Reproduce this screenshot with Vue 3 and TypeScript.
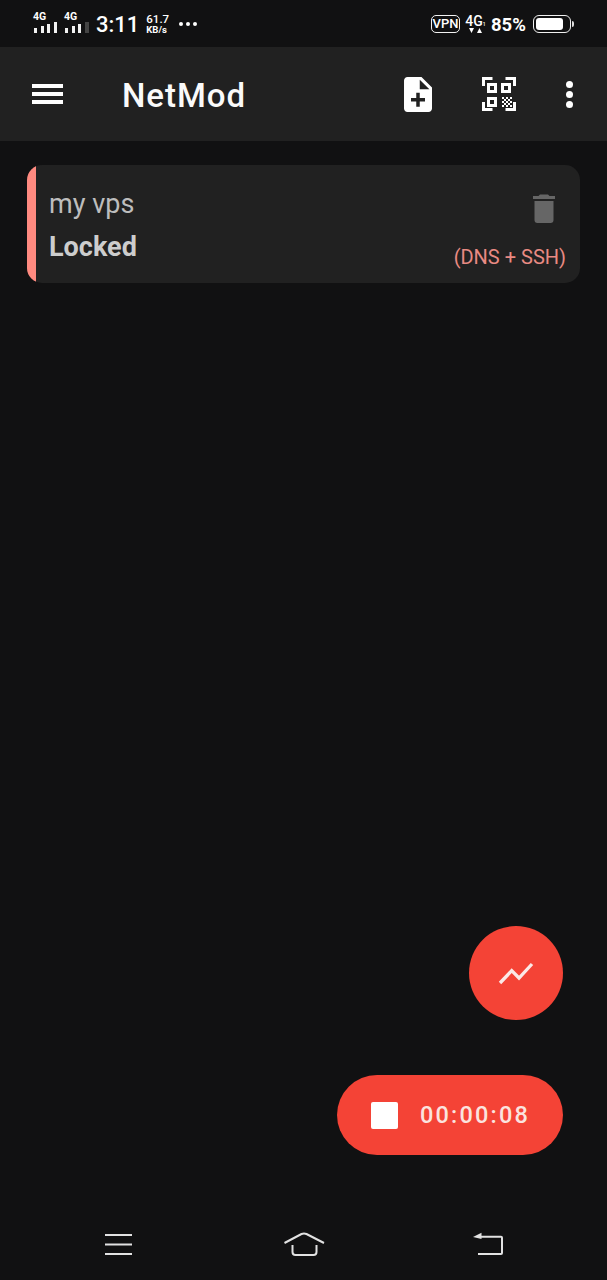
<script setup lang="ts">
const bars1: number[] = [5, 7, 9, 11]
const bars2: number[] = [5, 7, 9]
const checker: number[][] = [
  [20, 20], [24, 20], [28, 20],
  [22, 22], [26, 22],
  [20, 24], [24, 24], [28, 24],
  [22, 26], [26, 26],
  [20, 28], [24, 28], [28, 28]
]
</script>

<template>
  <div class="page">
    <header class="status">
      <div class="status-left">
        <div class="sig">
          <span class="sig-label">4G</span>
          <div class="bars">
            <i v-for="(h, i) in bars1" :key="i" :style="{ height: h + 'px' }"></i>
          </div>
        </div>
        <div class="sig sig-two">
          <span class="sig-label">4G</span>
          <div class="bars">
            <i v-for="(h, i) in bars2" :key="i" :style="{ height: h + 'px' }"></i>
            <i class="off"></i>
          </div>
        </div>
        <span class="time">3:11</span>
        <div class="speed"><span>61.7</span><span class="unit">KB/s</span></div>
        <div class="dots"><i></i><i></i><i></i></div>
      </div>
      <div class="status-right">
        <span class="vpn">VPN</span>
        <div class="net">
          <span class="net-label">4G<small>1</small></span>
          <svg width="15" height="5" viewBox="0 0 15 5"><path d="M1 0h5L3.500 5zM9 5l2.500-5L14 5z" fill="#fff" /></svg>
        </div>
        <span class="pct">85%</span>
        <div class="battery"><div class="level"></div></div>
        <div class="nub"></div>
      </div>
    </header>

    <nav class="appbar">
      <button class="burger" aria-label="menu"><i></i><i></i><i></i></button>
      <h1 class="title">NetMod</h1>
      <div class="actions">
        <svg class="a-file" width="28" height="35" viewBox="4 2 16 20">
          <path d="M14 2H6c-1.100 0-1.990.9-1.990 2L4 20c0 1.100.89 2 1.990 2H18c1.100 0 2-.9 2-2V8l-6-6zm2 14h-3v3h-2v-3H8v-2h3v-3h2v3h3v2zm-3-7V3.500L18.500 9H13z" fill="#fff" />
        </svg>
        <svg class="a-qr" width="34" height="34" viewBox="0 0 34 34" fill="none">
          <path d="M1.500 9V1.500H10.500M23.500 1.500h9V9M1.500 25v7.500H10.500M23.500 32.500h9V25" stroke="#fff" stroke-width="3" />
          <rect x="6.500" y="7.500" width="7" height="7" stroke="#fff" stroke-width="3" />
          <rect x="20.500" y="7.500" width="7" height="7" stroke="#fff" stroke-width="3" />
          <rect x="6.500" y="21.500" width="7" height="7" stroke="#fff" stroke-width="3" />
          <rect v-for="(c, i) in checker" :key="i" :x="c[0]" :y="c[1]" width="2" height="2" fill="#fff" />
        </svg>
        <div class="kebab"><i></i><i></i><i></i></div>
      </div>
    </nav>

    <main class="content">
      <section class="card">
        <div class="card-bar"></div>
        <div class="card-body">
          <div class="card-text">
            <div class="name">my vps</div>
            <div class="state">Locked</div>
          </div>
          <div class="card-side">
            <svg class="trash" width="24" height="30" viewBox="0 0 24 30">
              <path d="M8 1.500h8l1.500 1.500H23v3H1V3h5.500zM2.500 8h19v19a3 3 0 0 1-3 3h-13a3 3 0 0 1-3-3z" fill="#666" />
            </svg>
            <div class="type">(DNS + SSH)</div>
          </div>
        </div>
      </section>

      <div class="fabs">
        <button class="fab" aria-label="stats">
          <svg width="38" height="26" viewBox="0 0 38 26" fill="none">
            <path d="M3 23L14.700 10.700 22 18 35 4" stroke="#fbe9e7" stroke-width="3.300" />
          </svg>
        </button>
        <button class="pill">
          <span class="stop"></span>
          <span class="timer">00:00:08</span>
        </button>
      </div>
    </main>

    <footer class="navbar">
      <svg width="30" height="24" viewBox="0 0 30 24" fill="none">
        <path d="M1 3h27M1 12.500h27M1 22h27" stroke="#e2e2e2" stroke-width="2" />
      </svg>
      <svg class="nav-home" width="42" height="26" viewBox="0 0 42 26" fill="none">
        <path d="M1.500 11L18.500 2Q21 .8 23.500 2L41 11" stroke="#e2e2e2" stroke-width="2" />
        <path d="M9.500 13v7a3 3 0 0 0 3 3h18a3 3 0 0 0 3-3v-7" stroke="#e2e2e2" stroke-width="2" />
      </svg>
      <svg class="nav-back" width="32" height="24" viewBox="0 0 32 24" fill="none">
        <path d="M9 4.800h20a1 1 0 0 1 1 1V21a1 1 0 0 1-1 1H6" stroke="#e2e2e2" stroke-width="2" />
        <path d="M1 5l8.500-4.300V7z" fill="#e2e2e2" />
      </svg>
    </footer>
  </div>
</template>

<style>
html, body { margin: 0; background: #111; }
</style>

<style scoped>
.page {
  width: 607px;
  height: 1280px;
  display: flex;
  flex-direction: column;
  background: #111112;
  font-family: Roboto, "Liberation Sans", sans-serif;
  overflow: hidden;
}
.status {
  height: 47px;
  flex: none;
  display: flex;
  justify-content: space-between;
  color: #fff;
  background: #111112;
}
.status-left {
  display: flex;
  align-items: flex-start;
  padding: 12px 0 0 33px;
}
.sig { width: 31px; display: flex; flex-direction: column; }
.sig-two { width: 32px; }
.sig-label { font-size: 10.500px; font-weight: 700; line-height: 9px; height: 9px; }
.bars { display: flex; align-items: flex-end; gap: 3.600px; height: 11px; margin-top: 1px; padding-left: 1px; }
.bars i { width: 3px; background: #f2f2f2; display: block; flex: none; }
.bars i.off { height: 11px; width: 4px; background: #444; }
.time { font-size: 22px; font-weight: 500; line-height: 24px; margin-top: 1px; }
.speed {
  display: flex;
  flex-direction: column;
  font-size: 11.500px;
  line-height: 11px;
  margin: 2px 0 0 7px;
  font-weight: 500;
}
.unit { font-size: 9.500px; font-weight: 700; line-height: 9px; }
.dots { display: flex; gap: 3px; margin: 10px 0 0 10px; }
.dots i { width: 4px; height: 4px; border-radius: 50%; background: #fff; display: block; }
.status-right {
  display: flex;
  align-items: flex-start;
  padding: 15px 33px 0 0;
}
.vpn {
  width: 29px;
  height: 18px;
  box-sizing: border-box;
  border: 1.500px solid #f2f2f2;
  border-radius: 5px;
  font-size: 13px;
  font-weight: 500;
  line-height: 15px;
  text-align: center;
}
.net { display: flex; flex-direction: column; align-items: center; margin-left: 6px; width: 19px; }
.net-label { font-size: 14px; line-height: 12px; height: 12px; font-weight: 500; white-space: nowrap; }
.net-label small { font-size: 5px; }
.net svg { margin-top: 1px; }
.pct { font-size: 18.500px; font-weight: 700; line-height: 20px; margin-left: 6px; width: 35px; }
.battery {
  width: 38px;
  height: 18px;
  box-sizing: border-box;
  border: 1.500px solid #f0f0f0;
  border-radius: 6px;
  padding: 2px;
  margin-left: 7px;
}
.level { width: 27px; height: 100%; background: #fff; border-radius: 3px; }
.nub { width: 2px; height: 6px; background: #ddd; margin: 6px 0 0 1px; border-radius: 0 2px 2px 0; }
.appbar {
  height: 94px;
  flex: none;
  display: flex;
  align-items: center;
  background: #212121;
}
.burger {
  width: 31px;
  height: 20px;
  padding: 0;
  border: 0;
  background: none;
  margin: 0 0 0 32px;
  display: flex;
  flex-direction: column;
  justify-content: space-between;
}
.burger i { display: block; height: 4px; background: #fff; }
.title {
  margin: 3px 0 0 59px;
  font-size: 33px;
  font-weight: 500;
  color: #fafafa;
  letter-spacing: 0.950px;
  line-height: 40px;
}
.actions { margin-left: auto; display: flex; align-items: center; padding-right: 34px; }
.a-file { margin-right: 50px; }
.a-qr { margin-right: 50px; }
.kebab { width: 7px; height: 27px; display: flex; flex-direction: column; justify-content: space-between; }
.kebab i { display: block; width: 7px; height: 7px; border-radius: 50%; background: #fff; }
.content { flex: 1; display: flex; flex-direction: column; padding: 24px 27px 0; min-height: 0; box-sizing: border-box; }
.card {
  height: 118px;
  width: 553px;
  display: flex;
  background: #212121;
  border-radius: 15px;
  overflow: hidden;
  flex: none;
}
.card-bar { width: 9px; flex: none; background: #ff8a80; }
.card-body { flex: 1; display: flex; justify-content: space-between; padding: 0 14px 0 13px; }
.name { font-size: 27px; line-height: 30px; margin-top: 24px; color: #bdbdbd; }
.state { font-size: 27px; line-height: 30px; margin-top: 13px; font-weight: 700; color: #cdcdcd; }
.card-side { display: flex; flex-direction: column; align-items: flex-end; }
.trash { margin: 28px 10px 0 0; }
.type { font-size: 20px; line-height: 24px; margin-top: 22px; color: #e98a83; }
.fabs {
  margin-top: 643px;
  display: flex;
  flex-direction: column;
  align-items: flex-end;
  padding-right: 17px;
  gap: 55px;
}
.fab {
  width: 94px;
  height: 94px;
  padding: 0;
  border: 0;
  border-radius: 50%;
  background: #f44336;
  display: flex;
  align-items: center;
  justify-content: center;
}
.pill {
  width: 226px;
  height: 80px;
  box-sizing: border-box;
  padding: 0 0 0 34px;
  border: 0;
  border-radius: 40px;
  background: #f44336;
  display: flex;
  align-items: center;
  font-family: inherit;
}
.stop { width: 27px; height: 27px; background: #fff; border-radius: 2px; flex: none; }
.timer { font-size: 23.500px; font-weight: 500; letter-spacing: 2.200px; color: #fbe3df; margin-left: 22px; }
.navbar {
  height: 70px;
  flex: none;
  box-sizing: border-box;
  display: flex;
  align-items: flex-start;
  padding: 22px 0 0 104px;
}
.nav-home { margin-left: 149px; }
.nav-back { margin-left: 147px; }
</style>
